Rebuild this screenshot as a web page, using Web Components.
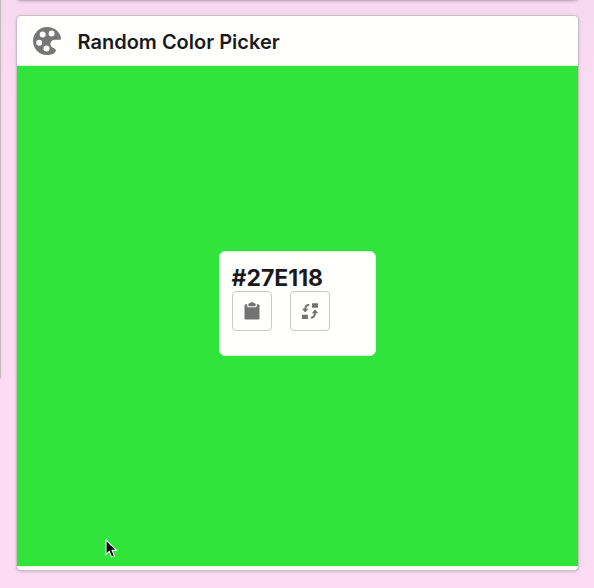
<!DOCTYPE html>
<html lang="en"><head><meta charset="utf-8"><title>Random Color Picker</title>
<style>html,body{margin:0;height:100%}body{overflow:hidden;font-family:Inter,"Liberation Sans",sans-serif;color:#1a1a1d}</style></head>
<body><picker-page></picker-page>
<script>
const define = (name, html) => customElements.define(name, class extends HTMLElement {
  constructor() { super(); this.attachShadow({mode: 'open'}).innerHTML = html; }
});

define('palette-icon', `<style>:host{display:block;width:28px;height:28px}svg{display:block}</style>
<svg width="28" height="28" viewBox="0 0 28 28"><path fill="#767676" fill-rule="evenodd" d="M14.3 0C21.5 0 27.2 5 28 11.2C28.1 12.2 27.6 12.7 26.5 12.7H21.8C19.2 12.7 17.4 14.7 17.4 17C17.4 19.3 18.8 20.4 21 21.2C22.8 22 23.2 23.4 22.4 24.8C21.4 26.9 17.8 28 14 28C6.2 28 0 21.8 0 14S6.5 0 14.3 0ZM9.7 4.4a3 3 0 1 0 0 6a3 3 0 1 0 0-6ZM18.6 3.5a3 3 0 1 0 0 6a3 3 0 1 0 0-6ZM6.2 12.7a3 3 0 1 0 0 6a3 3 0 1 0 0-6ZM13.5 18.5a3 3 0 1 0 0 6a3 3 0 1 0 0-6Z"/></svg>`);

define('clipboard-icon', `<style>:host{display:block;width:16px;height:18px}svg{display:block}</style>
<svg width="16" height="18" viewBox="0 0 16 18"><path fill="#737373" d="M2 2.2H3.2V3.8C3.2 4.8 3.8 5.3 4.8 5.3H11.2C12.2 5.3 12.8 4.8 12.8 3.8V2.2H14C15 2.2 15.5 2.8 15.5 3.7V16C15.5 17 15 17.5 14 17.5H2C1 17.5.5 17 .5 16V3.7C.5 2.8 1 2.2 2 2.2Z"/><path fill="#737373" d="M4.3 2.5C4.3 1.7 4.8 1.3 5.5 1.3H6.2C6.3.6 6.8.3 7.3.3H8.7C9.2.3 9.7.6 9.8 1.3H10.5C11.2 1.3 11.7 1.7 11.7 2.5V3.3C11.7 3.9 11.3 4.2 10.7 4.2H5.3C4.7 4.2 4.3 3.9 4.3 3.3Z"/></svg>`);

define('swap-icon', `<style>:host{display:block;width:18px;height:18px}svg{display:block}</style>
<svg width="18" height="18" viewBox="0 0 18 18"><path fill="#737373" d="M11 1.2h6v4.6h-6zM.9 12.7h6v4.4h-6z"/><path fill="none" stroke="#737373" stroke-width="2" d="M8.3 2.7C5.6 2.7 4.2 4.4 4.2 8M9.8 15.7C12.5 15.7 14 14 14 10"/><path fill="#737373" d="M.9 6.8H7.5L4.2 10.6ZM10.7 11.2H17.3L14 7.3Z"/></svg>`);

define('icon-button', `<style>:host{display:block}button{box-sizing:border-box;display:grid;place-items:center;width:40px;height:40px;padding:0;border:1px solid #c9c9cc;border-radius:4px;background:#fffffe}</style><button><slot></slot></button>`);

define('color-tile', `<style>:host{box-sizing:border-box;display:block;width:157px;height:105px;padding:12px;border:1px solid #d8f4d8;border-radius:6px;background:#fffffe}
h2{margin:2px 0 0;font-size:23px;line-height:25px;font-weight:700;letter-spacing:0}div{display:flex;gap:18px}</style>
<h2><slot></slot></h2><div><icon-button aria-label="Copy"><clipboard-icon></clipboard-icon></icon-button><icon-button aria-label="Change"><swap-icon></swap-icon></icon-button></div>`);

define('picker-card', `<style>:host{box-sizing:border-box;display:flex;flex-direction:column;width:563px;height:556px;border:1px solid #c9bfc7;border-radius:5px;background:#fffffe;box-shadow:0 1px 3px #786b7550;overflow:hidden}
header{box-sizing:border-box;height:50px;display:flex;align-items:center;gap:16.5px;padding:1px 16px 0;flex:none;border-bottom:1px solid #d9f5d9}
h1{font-size:20px;line-height:26px;font-weight:600;margin:2px 0 0;letter-spacing:0;white-space:nowrap}
main{height:500px;background:#30e43c;display:grid;place-items:center;padding:0}color-tile{margin-top:-25px;margin-right:1px}</style>
<header><palette-icon></palette-icon><h1><slot></slot></h1></header><main><color-tile>#27E118</color-tile></main>`);

define('mouse-pointer', `<style>:host{display:block;width:13px;height:20px}svg{display:block}</style><svg width="13" height="20" viewBox="0 0 13 20"><path d="M1 1V15.4L4.3 12.4L6.6 17.9L9.4 16.7L7.1 11.4H11.7Z" fill="#090c09" stroke="#f2fff2" stroke-width="1.1"/></svg>`);

define('picker-page', `<style>:host{position:relative;box-sizing:border-box;display:block;width:594px;height:588px;padding:15px 0 0 16px;background:linear-gradient(#f7d9ef,#fcdcf3 18%,#fcdcf3);overflow:hidden}
.above,.side,mouse-pointer{position:absolute}.above{left:17px;top:-8px;width:561px;height:8px;border-radius:5px;box-shadow:0 1px 3px #786b7590}.side{left:-6px;top:-8px;width:7px;height:387px;border-radius:4px;background:#c5bbc3;box-shadow:0 1px 2px #786b7540}mouse-pointer{left:105px;top:539px}</style>
<div class="above"></div><div class="side"></div><picker-card>Random Color Picker</picker-card><mouse-pointer></mouse-pointer>`);
</script></body></html>
